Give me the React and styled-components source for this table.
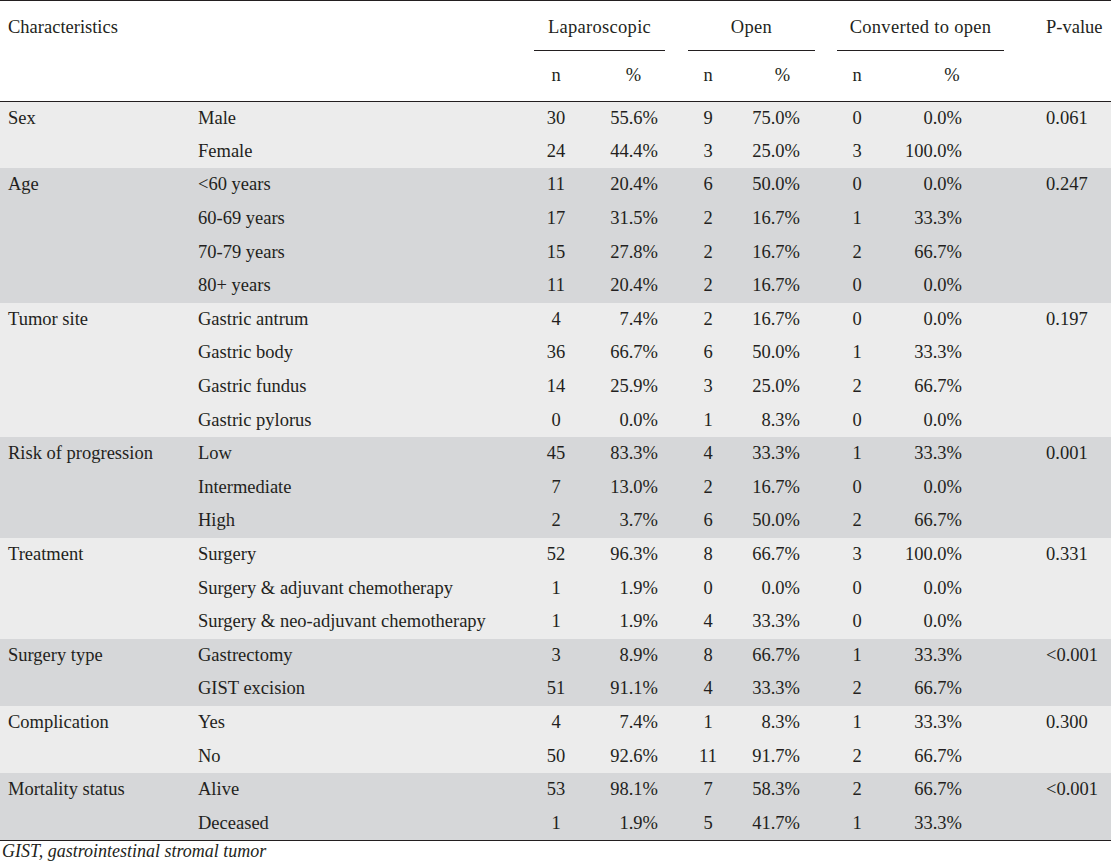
import styled, { createGlobalStyle } from 'styled-components'

const GlobalStyle = createGlobalStyle`
  html, body {
    margin: 0;
    padding: 0;
    background: #ffffff;
  }
  body {
    font-family: 'Liberation Serif', 'Times New Roman', serif;
    color: #231f20;
  }
`

const groups = [
  {
    label: 'Sex',
    p: '0.061',
    rows: [
      ['Male', '30', '55.6%', '9', '75.0%', '0', '0.0%'],
      ['Female', '24', '44.4%', '3', '25.0%', '3', '100.0%'],
    ],
  },
  {
    label: 'Age',
    p: '0.247',
    rows: [
      ['<60 years', '11', '20.4%', '6', '50.0%', '0', '0.0%'],
      ['60-69 years', '17', '31.5%', '2', '16.7%', '1', '33.3%'],
      ['70-79 years', '15', '27.8%', '2', '16.7%', '2', '66.7%'],
      ['80+ years', '11', '20.4%', '2', '16.7%', '0', '0.0%'],
    ],
  },
  {
    label: 'Tumor site',
    p: '0.197',
    rows: [
      ['Gastric antrum', '4', '7.4%', '2', '16.7%', '0', '0.0%'],
      ['Gastric body', '36', '66.7%', '6', '50.0%', '1', '33.3%'],
      ['Gastric fundus', '14', '25.9%', '3', '25.0%', '2', '66.7%'],
      ['Gastric pylorus', '0', '0.0%', '1', '8.3%', '0', '0.0%'],
    ],
  },
  {
    label: 'Risk of progression',
    p: '0.001',
    rows: [
      ['Low', '45', '83.3%', '4', '33.3%', '1', '33.3%'],
      ['Intermediate', '7', '13.0%', '2', '16.7%', '0', '0.0%'],
      ['High', '2', '3.7%', '6', '50.0%', '2', '66.7%'],
    ],
  },
  {
    label: 'Treatment',
    p: '0.331',
    rows: [
      ['Surgery', '52', '96.3%', '8', '66.7%', '3', '100.0%'],
      ['Surgery & adjuvant chemotherapy', '1', '1.9%', '0', '0.0%', '0', '0.0%'],
      ['Surgery & neo-adjuvant chemotherapy', '1', '1.9%', '4', '33.3%', '0', '0.0%'],
    ],
  },
  {
    label: 'Surgery type',
    p: '<0.001',
    rows: [
      ['Gastrectomy', '3', '8.9%', '8', '66.7%', '1', '33.3%'],
      ['GIST excision', '51', '91.1%', '4', '33.3%', '2', '66.7%'],
    ],
  },
  {
    label: 'Complication',
    p: '0.300',
    rows: [
      ['Yes', '4', '7.4%', '1', '8.3%', '1', '33.3%'],
      ['No', '50', '92.6%', '11', '91.7%', '2', '66.7%'],
    ],
  },
  {
    label: 'Mortality status',
    p: '<0.001',
    rows: [
      ['Alive', '53', '98.1%', '7', '58.3%', '2', '66.7%'],
      ['Deceased', '1', '1.9%', '5', '41.7%', '1', '33.3%'],
    ],
  },
]

// column widths, left to right
const widths = [190, 332, 68, 87, 62, 87, 62, 128, 95]
// right padding of the three % columns
const pctPad = { 3: 19, 5: 26, 7: 54 }

const App = () => {
  return (
    <Wrapper>
      <GlobalStyle />
      <Table>
        <colgroup>
          {widths.map((w, i) => (
            <col key={i} style={{ width: w }} />
          ))}
        </colgroup>
        <thead>
          <HeadTop>
            <HeadLead rowSpan={2}>Characteristics</HeadLead>
            <th rowSpan={2} />
            <GroupHead colSpan={2}>
              <GroupLabel $l={12} $r={12}>Laparoscopic</GroupLabel>
            </GroupHead>
            <GroupHead colSpan={2}>
              <GroupLabel $l={11} $r={11}>Open</GroupLabel>
            </GroupHead>
            <GroupHead colSpan={2}>
              <GroupLabel $l={11} $r={12}>Converted to open</GroupLabel>
            </GroupHead>
            <HeadLead rowSpan={2} $pad={30}>P-value</HeadLead>
          </HeadTop>
          <HeadSub>
            <SubCell>n</SubCell>
            <SubCell>%</SubCell>
            <SubCell>n</SubCell>
            <SubCell>%</SubCell>
            <SubCell>n</SubCell>
            <SubCell>%</SubCell>
          </HeadSub>
        </thead>
        {groups.map((g, gi) => (
          <Body key={g.label} $dark={gi % 2 === 1}>
            {g.rows.map((r, ri) => (
              <Row key={r[0]}>
                <TextCell $pad={8}>{ri === 0 ? g.label : ''}</TextCell>
                <TextCell $pad={8}>{r[0]}</TextCell>
                {r.slice(1).map((v, vi) =>
                  vi % 2 === 0 ? (
                    <CountCell key={vi}>{v}</CountCell>
                  ) : (
                    <PctCell key={vi} $pad={pctPad[vi + 2]}>
                      {v}
                    </PctCell>
                  )
                )}
                <TextCell $pad={30}>{ri === 0 ? g.p : ''}</TextCell>
              </Row>
            ))}
          </Body>
        ))}
      </Table>
      <Note>GIST, gastrointestinal stromal tumor</Note>
    </Wrapper>
  )
}

const Wrapper = styled.div`
  width: 1111px;
  font-family: 'Liberation Serif', 'Times New Roman', serif;
  font-size: 18.5px;
  color: #231f20;
`

const Table = styled.table`
  width: 1111px;
  border-collapse: collapse;
  table-layout: fixed;
  border-top: 1.5px solid #231f20;
  border-bottom: 1.5px solid #231f20;

  th,
  td {
    padding: 0;
    font-weight: normal;
    white-space: nowrap;
  }
`

const HeadTop = styled.tr`
  height: 50px;
`

const HeadSub = styled.tr`
  height: 50px;
  border-bottom: 1.5px solid #231f20;
`

const HeadLead = styled.th`
  text-align: left;
  vertical-align: top;
  padding: 15px 0 0 ${(p) => p.$pad || 8}px !important;
  line-height: 22px;
`

const GroupHead = styled.th`
  vertical-align: top;
`

const GroupLabel = styled.div`
  margin: 0 ${(p) => p.$r}px 0 ${(p) => p.$l}px;
  padding-top: 15px;
  height: 34px;
  line-height: 22px;
  text-align: center;
  border-bottom: 1px solid #231f20;
  letter-spacing: 0.3px;
`

const SubCell = styled.th`
  text-align: center;
  vertical-align: middle;
`

const Body = styled.tbody`
  background: ${(p) => (p.$dark ? '#d6d7d9' : '#ececec')};
`

const Row = styled.tr`
  height: 33.6px;
`

const TextCell = styled.td`
  text-align: left;
  padding-left: ${(p) => p.$pad}px !important;
  vertical-align: middle;
`

const CountCell = styled.td`
  text-align: center;
  vertical-align: middle;
`

const PctCell = styled.td`
  text-align: right;
  padding-right: ${(p) => p.$pad}px !important;
  vertical-align: middle;
`

const Note = styled.div`
  font-style: italic;
  font-size: 18px;
  padding: 0 0 0 2px;
  line-height: 20px;
`

export default App
